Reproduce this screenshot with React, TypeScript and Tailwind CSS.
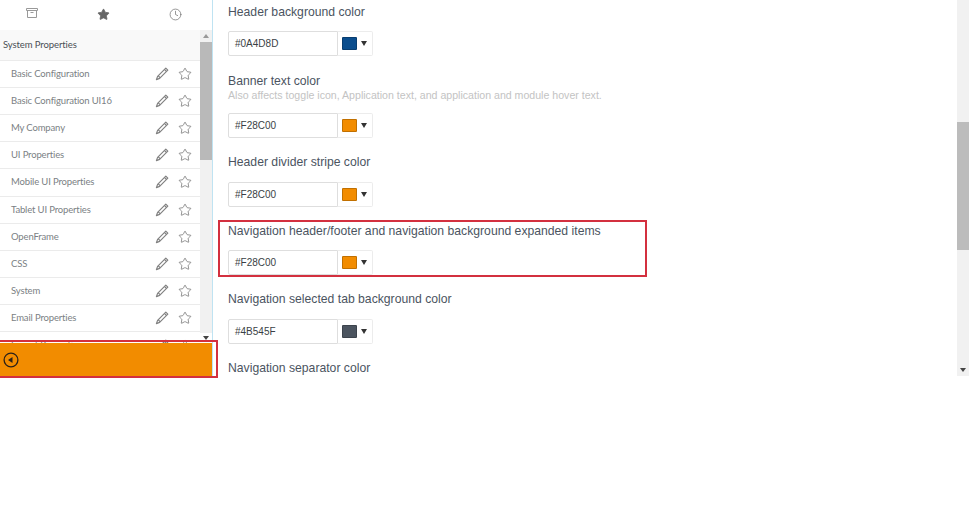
import { Star, Clock } from "lucide-react";

const rows = [
  "Basic Configuration",
  "Basic Configuration UI16",
  "My Company",
  "UI Properties",
  "Mobile UI Properties",
  "Tablet UI Properties",
  "OpenFrame",
  "CSS",
  "System",
  "Email Properties",
  "Import Properties",
];

function PencilIcon() {
  return (
    <svg width="14" height="14" viewBox="0 0 14 14" fill="none" stroke="#808080" strokeWidth="1.2" strokeLinejoin="round">
      <path d="M10.8 1.2 L12.8 3.2 L4.6 11.4 L1.4 12.6 L2.6 9.4 Z" />
      <path d="M3.4 9 L5 10.6 M9.6 2.6 L11.4 4.4" />
    </svg>
  );
}

function ArchiveIcon() {
  return (
    <svg width="12" height="10" viewBox="0 0 12 10" fill="none" stroke="#999" strokeWidth="1">
      <path d="M0.5 0.5 H11.5 V2.5 H0.5 Z" />
      <path d="M1.5 2.5 V9.5 H10.5 V2.5" />
      <path d="M4.5 4.5 H7.5" />
    </svg>
  );
}

function ColorField({ value, color }: { value: string; color: string }) {
  return (
    <div className="flex h-[25px] w-[145px]">
      <div className="flex w-[110px] items-center rounded-l-[2px] border border-[#dedede] pl-[6px] text-[10px] text-[#3a3f45]">
        {value}
      </div>
      <div className="flex w-[35px] items-center rounded-r-[2px] border border-l-0 border-[#ececec] pl-[4px]">
        <span className={`h-[13px] w-[15px] rounded-[1px] border border-black/20 ${color}`} />
        <span className="ml-[4px] border-x-[3px] border-t-[5px] border-x-transparent border-t-[#333]" />
      </div>
    </div>
  );
}

function Sidebar() {
  return (
    <aside className="relative flex h-[376px] w-[213px] shrink-0 flex-col border-r border-[#bfe3f2] font-['Lato','Open_Sans',sans-serif]">
      <div className="flex h-[30px] shrink-0 items-start pl-[26px] pt-[8px]">
        <div className="flex w-[71px] justify-start"><ArchiveIcon /></div>
        <div className="flex w-[72px] justify-start">
          <Star size={13} fill="#666" stroke="#666" strokeWidth={1.5} />
        </div>
        <div>
          <Clock size={13} stroke="#777" strokeWidth={1.4} />
        </div>
      </div>
      <div className="flex min-h-0 flex-1">
        <div className="min-w-0 flex-1 overflow-hidden">
          <div className="flex h-[30.6px] items-center border-b border-[#ebebeb] bg-[#f9f9f9] pl-[3px] text-[9.5px] tracking-[-0.1px] text-[#4a4f55]">
            System Properties
          </div>
          {rows.map((r) => (
            <div key={r} className="flex h-[27.2px] items-center border-b border-[#ebebeb] pl-[11px] pr-[8px] text-[9.5px] tracking-[-0.15px] text-[#7b7f84]">
              <span className="flex-1">{r}</span>
              <PencilIcon />
              <Star size={14} stroke="#666" strokeWidth={1.2} className="ml-[9px]" />
            </div>
          ))}
        </div>
        <div className="flex w-[12px] shrink-0 flex-col bg-[#f1f1f1]">
          <div className="flex h-[12px] items-center justify-center">
            <span className="border-x-[3px] border-b-[4px] border-x-transparent border-b-[#999]" />
          </div>
          <div className="h-[118px] bg-[#b9b9b9]" />
          <div className="flex-1" />
          <div className="flex h-[10px] items-center justify-center bg-white">
            <span className="border-x-[3px] border-t-[4px] border-x-transparent border-t-[#444]" />
          </div>
        </div>
      </div>
      <div className="flex h-[33px] shrink-0 items-center bg-[#f28c00] pl-[3px]">
        <svg width="16" height="16" viewBox="0 0 16 16" fill="none">
          <circle cx="8" cy="8" r="6.9" stroke="#2b2118" strokeWidth="1.3" />
          <path d="M5 8 L9.5 5 V11 Z" fill="#2b2118" />
        </svg>
      </div>
      <div className="pointer-events-none absolute left-[-4px] top-[340px] h-[38px] w-[222px] border-2 border-[#d3303f]" />
    </aside>
  );
}

function Label({ children }: { children: string }) {
  return <div className="h-[16px] text-[12.2px] leading-[18px] text-[#4b545f]">{children}</div>;
}

export default function App() {
  return (
    <div className="flex h-[380px] w-[969px] items-start bg-white font-['Liberation_Sans',Arial,sans-serif]">
      <Sidebar />
      <main className="h-[376px] min-w-0 flex-1 pl-[15px] pt-[3px]">
        <Label>Header background color</Label>
        <div className="mt-[12px] mb-[15.5px]">
          <ColorField value="#0A4D8D" color="bg-[#0a4d8d]" />
        </div>
        <Label>Banner text color</Label>
        <div className="h-[14px] text-[10.6px] leading-[14px] text-[#c3c3c3]">
          Also affects toggle icon, Application text, and application and module hover text.
        </div>
        <div className="mt-[11px] mb-[15.5px]">
          <ColorField value="#F28C00" color="bg-[#f28c00]" />
        </div>
        <Label>Header divider stripe color</Label>
        <div className="mt-[12.5px] mb-[15px]">
          <ColorField value="#F28C00" color="bg-[#f28c00]" />
        </div>
        <div className="relative">
          <Label>Navigation header/footer and navigation background expanded items</Label>
          <div className="pointer-events-none absolute left-[-10px] top-[-2px] h-[57px] w-[429px] border-2 border-[#d3303f]" />
          <div className="mt-[12px] mb-[15.5px]">
            <ColorField value="#F28C00" color="bg-[#f28c00]" />
          </div>
        </div>
        <Label>Navigation selected tab background color</Label>
        <div className="mt-[12.5px] mb-[15.5px]">
          <ColorField value="#4B545F" color="bg-[#4b545f]" />
        </div>
        <Label>Navigation separator color</Label>
      </main>
      <div className="flex h-[376px] w-[12px] shrink-0 flex-col bg-[#f1f1f1]">
        <div className="h-[122px]" />
        <div className="h-[128px] bg-[#bcbcbc]" />
        <div className="flex-1" />
        <div className="flex h-[12px] items-center justify-center">
          <span className="border-x-[3px] border-t-[4px] border-x-transparent border-t-[#444]" />
        </div>
      </div>
    </div>
  );
}
